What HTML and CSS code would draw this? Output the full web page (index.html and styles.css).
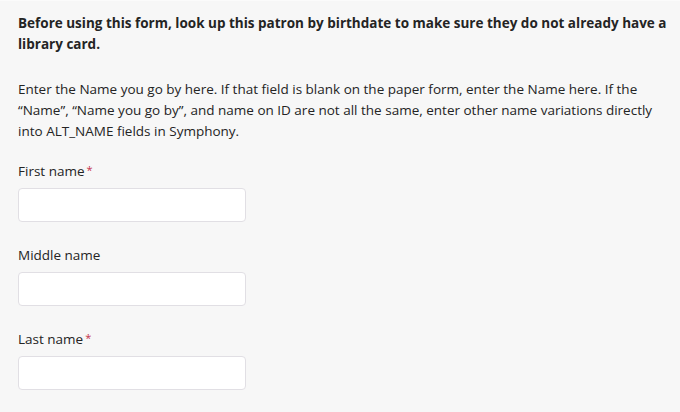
FILE: index.html
```html
<!DOCTYPE html>
<html lang="en">
<head>
  <meta charset="UTF-8">
  <meta name="viewport" content="width=device-width, initial-scale=1.0">
  <title>Patron registration</title>
  <link rel="stylesheet" href="styles.css">
</head>
<body>
  <div class="form">
    <p class="notice">Before using this form, look up this patron by birthdate to make sure they do not already have a library card.</p>
    <p class="intro">Enter the Name you go by here. If that field is blank on the paper form, enter the Name here. If the “Name”, “Name you go by”, and name on ID are not all the same, enter other name variations directly into ALT_NAME fields in Symphony.</p>

    <div class="field">
      <label for="firstName">First name<span class="required">*</span></label>
      <input type="text" id="firstName">
    </div>

    <div class="field">
      <label for="middleName">Middle name</label>
      <input type="text" id="middleName">
    </div>

    <div class="field">
      <label for="lastName">Last name<span class="required">*</span></label>
      <input type="text" id="lastName">
    </div>
  </div>
</body>
</html>
```

FILE: styles.css
```css
body {
  margin: 0;
  background: #f7f7f7;
  font-family: "Open Sans", "Liberation Sans", sans-serif;
  font-size: 13.5px;
  color: #242424;
}

.form {
  border-top: 1px solid #fbfbfb;
  padding: 12px 10px 20px 18px;
}

p {
  margin: 0;
  line-height: 21px;
}

.notice {
  font-weight: bold;
}

.intro {
  margin-top: 24px;
}

.field {
  margin-top: 23px;
}

.field:first-of-type {
  margin-top: 19px;
}

label {
  display: block;
  height: 20px;
  line-height: 20px;
  margin-bottom: 7px;
}

.required {
  color: #c4314b;
  margin-left: 2px;
  font-size: 11px;
  line-height: 0;
  vertical-align: 2px;
}

input {
  display: block;
  box-sizing: border-box;
  width: 228px;
  height: 34px;
  border: 1px solid #e1dfe4;
  border-radius: 4px;
  background: #fff;
  padding: 0 10px;
  font: inherit;
}
```
